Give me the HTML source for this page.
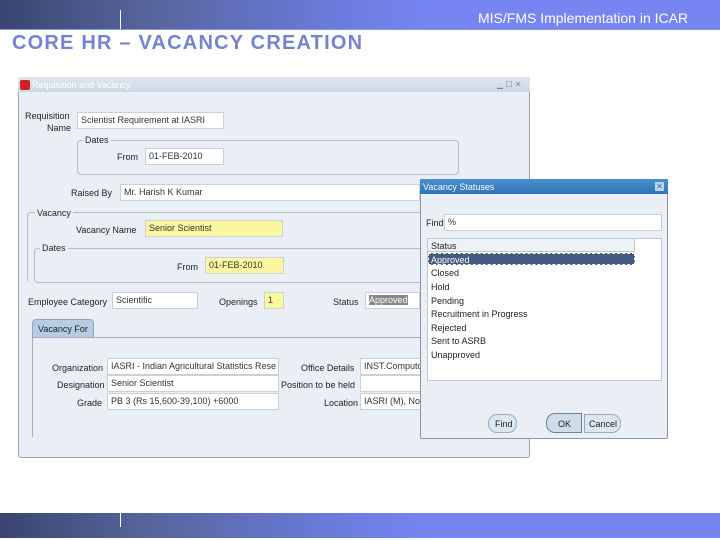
<!DOCTYPE html>
<html><head><style>
*{margin:0;padding:0;box-sizing:border-box}
body{width:720px;height:540px;position:relative;background:#fff;font-family:"Liberation Sans",sans-serif;overflow:hidden}
.a{position:absolute}
.banner{background:linear-gradient(90deg,#3a4570 0%,#56649a 20%,#6a7ad8 45%,#7685f2 60%,#7685f2 100%)}
.t{font-size:9px;color:#222;position:absolute;white-space:nowrap}
.f{position:absolute;background:#fff;border:1px solid #c8d0dc;height:17px;font-size:9px;color:#333;padding:2px 3px;white-space:nowrap;overflow:hidden}
.y{background:#fbf7a0}
.grp{position:absolute;border:1px solid #b4bcc8;border-radius:4px}
</style></head><body>
<div class="a banner" style="left:0;top:0;width:720px;height:29px"></div>
<div class="a" style="left:0;top:29px;width:720px;height:1px;background:#8a98e0"></div>
<div class="a" style="left:120px;top:10px;width:1px;height:19px;background:#fff"></div>
<div class="a" style="left:478px;top:10px;font-size:14px;color:#fff">MIS/FMS Implementation in ICAR</div>
<div class="a" style="left:12px;top:32px;font-size:20px;font-weight:bold;color:#7482d0;letter-spacing:1.2px">CORE HR – VACANCY CREATION</div>

<div class="a banner" style="left:0;top:513px;width:720px;height:25px"></div>
<div class="a" style="left:120px;top:513px;width:1px;height:14px;background:#fff"></div>

<div class="a" style="left:529px;top:77px;width:1px;height:103px;background:#aaa"></div>
<div class="a" style="left:18px;top:77px;width:512px;height:381px;background:#eaeff6;border:1px solid #9aa4b4;border-radius:0 0 3px 3px"></div>
<div class="a" style="left:18px;top:77px;width:512px;height:15px;background:linear-gradient(#dfe6ef,#cdd7e4)"></div>
<div class="a" style="left:20px;top:80px;width:10px;height:10px;background:#d02020;border-radius:2px"></div>
<div class="t" style="left:32px;top:80px;color:#fff">Requisition and Vacancy</div>
<div class="a" style="left:497px;top:80px;width:30px;height:9px;font-size:8px;color:#789">▁ ☐ ✕</div>

<div class="t" style="left:25px;top:111px">Requisition</div>
<div class="t" style="left:47px;top:123px">Name</div>
<div class="f" style="left:77px;top:112px;width:147px">Scientist Requirement at IASRI</div>
<div class="grp" style="left:77px;top:140px;width:382px;height:35px"></div>
<div class="t" style="left:83px;top:135px;background:#eaeff6;padding:0 2px">Dates</div>
<div class="f" style="left:145px;top:148px;width:79px">01-FEB-2010</div>
<div class="t" style="left:117px;top:152px">From</div>
<div class="t" style="left:71px;top:188px">Raised By</div>
<div class="f" style="left:120px;top:184px;width:300px">Mr. Harish K Kumar</div>

<div class="grp" style="left:27px;top:212px;width:400px;height:70px;border-width:1px 0 0 1px"></div>
<div class="t" style="left:35px;top:208px;background:#eaeff6;padding:0 2px">Vacancy</div>
<div class="t" style="left:76px;top:225px">Vacancy Name</div>
<div class="f y" style="left:145px;top:220px;width:138px">Senior Scientist</div>
<div class="grp" style="left:34px;top:248px;width:390px;height:35px"></div>
<div class="t" style="left:40px;top:243px;background:#eaeff6;padding:0 2px">Dates</div>
<div class="t" style="left:177px;top:262px">From</div>
<div class="f y" style="left:205px;top:257px;width:79px">01-FEB-2010</div>

<div class="t" style="left:28px;top:297px">Employee Category</div>
<div class="f" style="left:112px;top:292px;width:86px">Scientific</div>
<div class="t" style="left:219px;top:297px">Openings</div>
<div class="f y" style="left:264px;top:292px;width:20px">1</div>
<div class="t" style="left:333px;top:297px">Status</div>
<div class="f" style="left:365px;top:292px;width:55px"><span style="background:#888;color:#fff">Approved</span></div>

<div class="a" style="left:32px;top:319px;width:62px;height:19px;background:#b6cce2;border:1px solid #8ea6c0;border-radius:4px 4px 0 0"></div>
<div class="t" style="left:38px;top:324px">Vacancy For</div>
<div class="a" style="left:32px;top:337px;width:390px;height:100px;border-left:1px solid #aab;border-top:1px solid #aab"></div>
<div class="t" style="left:52px;top:363px">Organization</div>
<div class="f" style="left:107px;top:358px;width:172px">IASRI - Indian Agricultural Statistics Rese</div>
<div class="t" style="left:57px;top:380px">Designation</div>
<div class="f" style="left:107px;top:375px;width:172px">Senior Scientist</div>
<div class="t" style="left:77px;top:398px">Grade</div>
<div class="f" style="left:107px;top:393px;width:172px">PB 3 (Rs 15,600-39,100) +6000</div>
<div class="t" style="left:301px;top:363px">Office Details</div>
<div class="f" style="left:360px;top:358px;width:62px">INST.Computo</div>
<div class="t" style="left:281px;top:380px">Position to be held</div>
<div class="f" style="left:360px;top:375px;width:62px"></div>
<div class="t" style="left:324px;top:398px">Location</div>
<div class="f" style="left:360px;top:393px;width:62px">IASRI (M), No</div>

<div class="a" style="left:420px;top:179px;width:248px;height:260px;background:#eaeff6;border:1px solid #8a96a8;border-radius:2px"></div>
<div class="a" style="left:420px;top:179px;width:248px;height:15px;background:linear-gradient(#4a90d0,#2f74b8)"></div>
<div class="t" style="left:423px;top:182px;color:#fff">Vacancy Statuses</div>
<div class="a" style="left:655px;top:182px;width:9px;height:9px;background:#bcd6f0;font-size:8px;line-height:9px;text-align:center;color:#36c">✕</div>
<div class="t" style="left:426px;top:218px">Find</div>
<div class="f" style="left:444px;top:214px;width:218px">%</div>
<div class="a" style="left:427px;top:238px;width:235px;height:143px;background:#fff;border:1px solid #c0c8d4"></div>
<div class="a" style="left:427px;top:238px;width:208px;height:14px;background:#eef2f7;border:1px solid #bcc"></div>
<div class="t" style="left:431px;top:241px">Status</div>
<div class="a" style="left:428px;top:253px;width:207px;height:12px;background:#445a80;border:1px dashed #fff"></div>
<div class="t" style="left:431px;top:255px;color:#fff">Approved</div>
<div class="t" style="left:431px;top:268px">Closed</div>
<div class="t" style="left:431px;top:282px">Hold</div>
<div class="t" style="left:431px;top:296px">Pending</div>
<div class="t" style="left:431px;top:309px">Recruitment in Progress</div>
<div class="t" style="left:431px;top:323px">Rejected</div>
<div class="t" style="left:431px;top:336px">Sent to ASRB</div>
<div class="t" style="left:431px;top:350px">Unapproved</div>
<div class="a" style="left:488px;top:414px;width:29px;height:19px;background:#dde7f2;border:1px solid #9aabbf;border-radius:9px"></div>
<div class="t" style="left:495px;top:419px">Find</div>
<div class="a" style="left:546px;top:413px;width:36px;height:20px;background:#cfdcea;border:1px solid #6d7f96;border-radius:9px 0 0 9px"></div>
<div class="t" style="left:558px;top:419px">OK</div>
<div class="a" style="left:584px;top:414px;width:37px;height:19px;background:#dde7f2;border:1px solid #9aabbf;border-radius:0 9px 9px 0"></div>
<div class="t" style="left:589px;top:419px">Cancel</div>
</body></html>
